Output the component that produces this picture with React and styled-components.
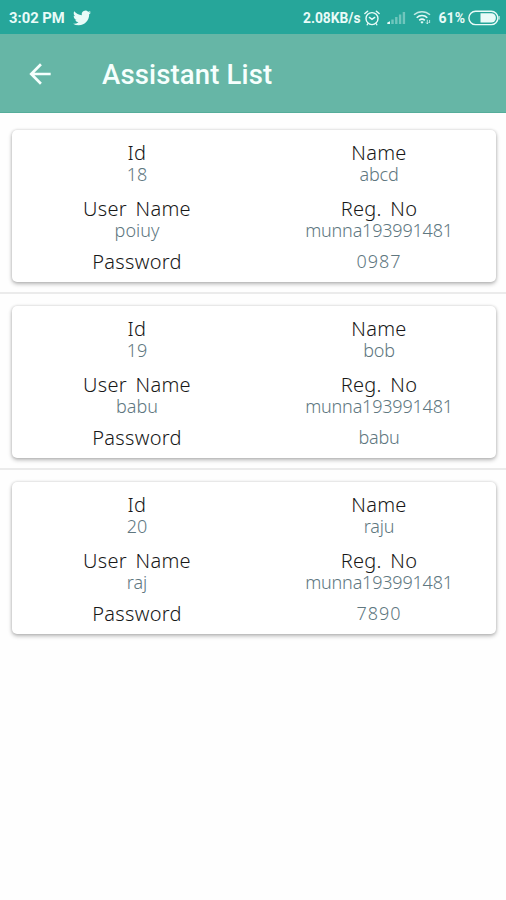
import React from 'react';
import styled, { createGlobalStyle } from 'styled-components';

const GlobalStyle = createGlobalStyle`
  * {
    box-sizing: border-box;
  }
  body {
    margin: 0;
    background: #fefefe;
    font-family: Roboto, 'Liberation Sans', sans-serif;
  }
`;

const Screen = styled.div`
  min-height: 900px;
`;

const StatusBar = styled.div`
  display: flex;
  align-items: center;
  justify-content: space-between;
  height: 34px;
  padding: 1px 6px 0 9px;
  background: #26a69a;
  color: #e9fbf8;
`;

const StatusGroup = styled.div`
  display: flex;
  align-items: center;
  svg {
    display: block;
    flex: none;
  }
`;

const StatusIcons = styled.div`
  display: flex;
  align-items: center;
  gap: 7px;
  margin: 0 7px 0 3px;
`;

const StatusText = styled.span`
  font-size: ${({ $size }) => $size || 14}px;
  font-weight: 700;
  line-height: 20px;
  margin-right: ${({ $gap }) => $gap || 0}px;
  white-space: nowrap;
`;

const AppBar = styled.header`
  display: flex;
  align-items: center;
  height: 79px;
  padding: 0 24px;
  background: #66b6a6;
  border-bottom: 1px solid #55ad9a;
  color: #f6fffd;
`;

const BackButton = styled.button`
  display: flex;
  width: 32px;
  height: 32px;
  margin-top: 1px;
  padding: 0;
  border: 0;
  background: none;
  color: inherit;
`;

const Title = styled.h1`
  margin: 3px 0 0 46px;
  font-size: 27.5px;
  font-weight: 500;
  line-height: 32px;
  letter-spacing: 0.15px;
`;

const List = styled.main`
  padding-top: 5px;
`;

const ListItem = styled.section`
  height: 176px;
  padding: 12px 10px 0 12px;
  border-bottom: 2px solid #ebebeb;
  &:last-child {
    border-bottom: 0;
  }
`;

const Card = styled.div`
  display: grid;
  grid-template-columns: 242px 242px;
  grid-template-rows: 56px 53px 22px;
  height: 152px;
  padding-top: 12px;
  border-radius: 5px;
  background: #fff;
  box-shadow: 0 2px 4px rgba(0, 0, 0, 0.28), 0 0 3px rgba(0, 0, 0, 0.15);
`;

const Cell = styled.div`
  display: flex;
  flex-direction: column;
  align-items: center;
  padding-left: 8px;
  font-family: 'Noto Sans', 'Open Sans', sans-serif;
  font-weight: 300;
`;

const Label = styled.span`
  font-size: 20px;
  line-height: 22px;
  letter-spacing: 0.3px;
  word-spacing: 3px;
  color: #181818;
  white-space: nowrap;
`;

const Value = styled.span`
  margin-top: -1px;
  font-size: 18px;
  line-height: 22px;
  letter-spacing: ${({ $spacing }) => $spacing || 0}px;
  color: #60777f;
  white-space: nowrap;
`;

const assistants = [
  { id: '18', name: 'abcd', userName: 'poiuy', regNo: 'munna193991481', password: '0987' },
  { id: '19', name: 'bob', userName: 'babu', regNo: 'munna193991481', password: 'babu' },
  { id: '20', name: 'raju', userName: 'raj', regNo: 'munna193991481', password: '7890' },
];

function TwitterIcon() {
  return (
    <svg width="18" height="18" viewBox="0 0 24 24" fill="currentColor">
      <path d="M23.95 4.57a10 10 0 0 1-2.82.77 4.96 4.96 0 0 0 2.16-2.72c-.95.55-2 .96-3.13 1.18a4.92 4.92 0 0 0-8.38 4.48C7.69 8.1 4.07 6.13 1.64 3.16a4.82 4.82 0 0 0-.67 2.48c0 1.71.87 3.21 2.19 4.1a4.9 4.9 0 0 1-2.23-.62v.06a4.92 4.92 0 0 0 3.95 4.83 5 5 0 0 1-2.21.08 4.94 4.94 0 0 0 4.6 3.42A9.87 9.87 0 0 1 0 19.54a13.99 13.99 0 0 0 7.56 2.21c9.05 0 14-7.5 14-13.98 0-.21 0-.42-.02-.63a9.94 9.94 0 0 0 2.41-2.57z" />
    </svg>
  );
}

function AlarmIcon() {
  return (
    <svg width="16" height="16" viewBox="0 0 16 16" fill="none" stroke="currentColor" strokeLinecap="round">
      <circle cx="8" cy="8.6" r="6" strokeWidth="1.4" />
      <path d="M.9 3.5 3.6 1.2M15.1 3.5l-2.7-2.3" strokeWidth="1.5" />
      <path d="m5.4 7.4 2.6 2 2.7-2" strokeWidth="1.4" />
      <path d="m4 13.5-.9 1.3M12 13.5l.9 1.3" strokeWidth="1.2" />
    </svg>
  );
}

function SignalIcon() {
  return (
    <svg width="19" height="14" viewBox="0 0 19 14" fill="currentColor">
      <path d="M.3 13v-1.6L3 10.2V13z" />
      <g opacity="0.38">
        <rect x="4.3" y="8.5" width="2.4" height="4.5" />
        <rect x="8.1" y="6" width="2.4" height="7" />
        <rect x="11.9" y="3.5" width="2.4" height="9.5" />
        <rect x="15.7" y="1" width="2.4" height="12" />
      </g>
    </svg>
  );
}

function WifiIcon() {
  return (
    <svg width="19" height="15" viewBox="0 0 19 15" fill="none" stroke="currentColor">
      <path d="M1 4.8C5.6.6 12.4.6 17 4.8" strokeWidth="1.5" opacity="0.8" />
      <path d="M3.7 7.8c3.1-3 7.5-3 10.6 0" strokeWidth="1.6" />
      <path d="M6.2 10.3c1.7-1.5 3.9-1.5 5.6 0" strokeWidth="1.6" />
      <path d="M7.4 12 9 13.8l1.6-1.8a2.2 2.2 0 0 0-3.2 0z" fill="currentColor" stroke="none" />
      <path d="M14.3 9.8v4m-1.3-1.3 1.3 1.3 1.3-1.3M16.6 10v3" strokeWidth="1" opacity="0.75" />
    </svg>
  );
}

function BatteryIcon() {
  return (
    <svg width="32" height="16" viewBox="0 0 32 16" fill="none">
      <rect x="0.9" y="1.2" width="29" height="13.4" rx="6.7" stroke="currentColor" strokeWidth="1.4" />
      <path d="M12.5 3.2h10.7a4.7 4.7 0 0 1 0 9.4H12.5z" fill="currentColor" />
      <path d="M31.1 6v3.6" stroke="currentColor" strokeWidth="1" />
    </svg>
  );
}

function BackIcon() {
  return (
    <svg width="32" height="32" viewBox="0 0 24 24" fill="currentColor">
      <path d="M20 11H7.83l5.59-5.59L12 4l-8 8 8 8 1.41-1.41L7.83 13H20v-2z" />
    </svg>
  );
}

function AssistantCard({ assistant }) {
  // all-digit passwords are set a little wider than words
  const passwordSpacing = /^\d+$/.test(assistant.password) ? 1 : -0.2;

  return (
    <Card>
      <Cell>
        <Label>Id</Label>
        <Value>{assistant.id}</Value>
      </Cell>
      <Cell>
        <Label>Name</Label>
        <Value $spacing={-0.2}>{assistant.name}</Value>
      </Cell>
      <Cell>
        <Label>User Name</Label>
        <Value>{assistant.userName}</Value>
      </Cell>
      <Cell>
        <Label>Reg. No</Label>
        <Value $spacing={-0.2}>{assistant.regNo}</Value>
      </Cell>
      <Cell>
        <Label>Password</Label>
      </Cell>
      <Cell>
        <Value $spacing={passwordSpacing}>{assistant.password}</Value>
      </Cell>
    </Card>
  );
}

export default function App() {
  return (
    <Screen>
      <GlobalStyle />
      <StatusBar>
        <StatusGroup>
          <StatusText $size={14.8} $gap={8}>
            3:02 PM
          </StatusText>
          <TwitterIcon />
        </StatusGroup>
        <StatusGroup>
          <StatusText $size={13.8}>2.08KB/s</StatusText>
          <StatusIcons>
            <AlarmIcon />
            <SignalIcon />
            <WifiIcon />
          </StatusIcons>
          <StatusText $gap={3}>61%</StatusText>
          <BatteryIcon />
        </StatusGroup>
      </StatusBar>
      <AppBar>
        <BackButton aria-label="Back">
          <BackIcon />
        </BackButton>
        <Title>Assistant List</Title>
      </AppBar>
      <List>
        {assistants.map((assistant) => (
          <ListItem key={assistant.id}>
            <AssistantCard assistant={assistant} />
          </ListItem>
        ))}
      </List>
    </Screen>
  );
}
